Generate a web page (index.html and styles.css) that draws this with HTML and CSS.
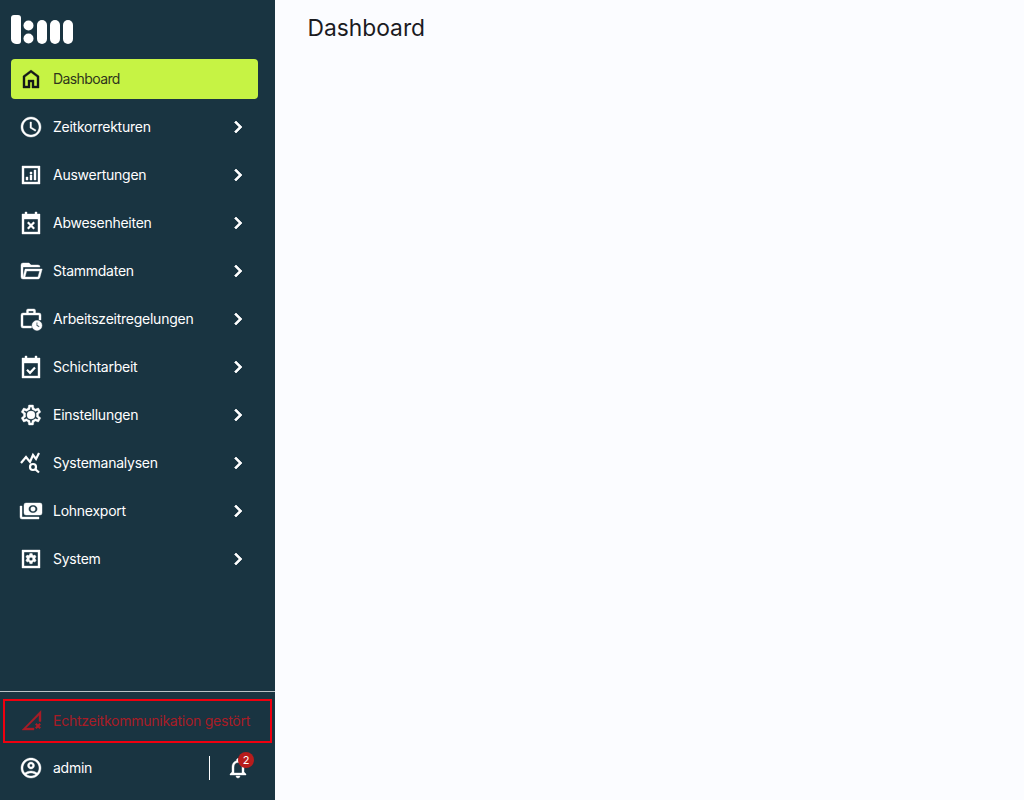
FILE: index.html
```html
<!DOCTYPE html>
<html lang="de">
<head>
<meta charset="utf-8">
<title>Dashboard</title>
<link rel="stylesheet" href="styles.css">
</head>
<body>
<div class="app">
  <aside class="sidebar">
    <div class="logo">
      <svg width="63" height="29" viewBox="0 0 63 29" fill="#fff">
        <path d="M3 0h4a3 3 0 0 1 3 3v23a3 3 0 0 1-3 3H5a5 5 0 0 1-5-5V3a3 3 0 0 1 3-3z"/>
        <circle cx="17.5" cy="10.5" r="5"/><circle cx="17.5" cy="23.5" r="5"/>
        <rect x="26" y="5" width="10" height="24" rx="5"/>
        <rect x="39" y="5" width="10" height="24" rx="5"/>
        <rect x="52" y="5" width="10" height="24" rx="5"/>
      </svg>
    </div>
    <nav class="nav">
      <a class="item active">
        <svg class="icon" viewBox="0 0 24 24"><path d="M6 19h3v-6h6v6h3v-9l-6-4.500L6 10v9zm-2 2V9l8-6 8 6v12h-7v-6h-2v6H4z"/></svg>
        <span class="label">Dashboard</span>
      </a>
      <a class="item">
        <svg class="icon" viewBox="0 0 24 24"><path d="M11.99 2C6.47 2 2 6.48 2 12s4.47 10 9.99 10C17.52 22 22 17.52 22 12S17.52 2 11.99 2zM12 20c-4.42 0-8-3.58-8-8s3.58-8 8-8 8 3.58 8 8-3.58 8-8 8zm.5-13H11v6l5.25 3.15.75-1.23-4.5-2.67z"/></svg>
        <span class="label">Zeitkorrekturen</span>
        <svg class="chev" viewBox="0 0 24 24"><path d="M10 6L8.59 7.41 13.17 12l-4.58 4.59L10 18l6-6z"/></svg>
      </a>
      <a class="item">
        <svg class="icon" viewBox="0 0 24 24"><path d="M3 3h18v18H3V3zm2 2v14h14V5H5zM7 14h2v3H7zm4-2h2v5h-2zm0-3h2v2h-2zm4-2h2v10h-2z"/></svg>
        <span class="label">Auswertungen</span>
        <svg class="chev" viewBox="0 0 24 24"><path d="M10 6L8.59 7.41 13.17 12l-4.58 4.59L10 18l6-6z"/></svg>
      </a>
      <a class="item">
        <svg class="icon" viewBox="0 0 24 24"><path d="M3 3h3V1h2v2h8V1h2v2h3v20H3V3zm2 5v13h14V8H5z"/><path class="line" d="M8.800 11.300l6.400 6.400m0-6.400l-6.400 6.400"/></svg>
        <span class="label">Abwesenheiten</span>
        <svg class="chev" viewBox="0 0 24 24"><path d="M10 6L8.59 7.41 13.17 12l-4.58 4.59L10 18l6-6z"/></svg>
      </a>
      <a class="item">
        <svg class="icon" viewBox="0 0 24 24"><path d="M6.1 10L4 18V8h17a2 2 0 0 0-2-2h-7l-2-2H4a2 2 0 0 0-2 2v12a2 2 0 0 0 2 2h15c.9 0 1.700-.6 1.900-1.500L23.200 10H6.100M19 18H6l1.600-6h13L19 18z"/></svg>
        <span class="label">Stammdaten</span>
        <svg class="chev" viewBox="0 0 24 24"><path d="M10 6L8.59 7.41 13.17 12l-4.58 4.59L10 18l6-6z"/></svg>
      </a>
      <a class="item">
        <svg class="icon" viewBox="0 0 24 24"><path d="M9 2h6a1.500 1.500 0 0 1 1.500 1.500V6H20a2 2 0 0 1 2 2v5h-2V8H4v11h8.500v2H4a2 2 0 0 1-2-2V8a2 2 0 0 1 2-2h3.500V3.500A1.500 1.500 0 0 1 9 2zm.5 2v2h5V4h-5z"/><path fill-rule="evenodd" d="M18 13.500a5 5 0 1 1 0 10 5 5 0 0 1 0-10zM17.400 15.500v3.200l2.500 1.500.6-.9-2-1.200v-2.600h-1.100z"/></svg>
        <span class="label">Arbeitszeitregelungen</span>
        <svg class="chev" viewBox="0 0 24 24"><path d="M10 6L8.59 7.41 13.17 12l-4.58 4.59L10 18l6-6z"/></svg>
      </a>
      <a class="item">
        <svg class="icon" viewBox="0 0 24 24"><path d="M3 3h3V1h2v2h8V1h2v2h3v20H3V3zm2 5v13h14V8H5z"/><path class="line" d="M8 14.800l3 3 5-5.400"/></svg>
        <span class="label">Schichtarbeit</span>
        <svg class="chev" viewBox="0 0 24 24"><path d="M10 6L8.59 7.41 13.17 12l-4.58 4.59L10 18l6-6z"/></svg>
      </a>
      <a class="item">
        <svg class="icon" viewBox="0 0 24 24"><path d="M19.430 12.980c.04-.32.07-.64.07-.98 0-.34-.03-.66-.07-.98l2.110-1.650c.19-.15.24-.42.12-.64l-2-3.460c-.09-.16-.26-.25-.44-.25-.06 0-.12.01-.17.03l-2.490 1c-.52-.4-1.080-.73-1.690-.98l-.38-2.650C14.460 2.180 14.250 2 14 2h-4c-.25 0-.46.18-.49.42l-.38 2.650c-.61.25-1.170.59-1.690.98l-2.490-1c-.06-.02-.12-.03-.18-.03-.17 0-.34.09-.43.25l-2 3.460c-.13.22-.07.49.12.64l2.110 1.650c-.04.32-.07.65-.07.98 0 .33.03.66.07.98l-2.110 1.650c-.19.15-.24.42-.12.64l2 3.460c.09.16.26.25.44.25.06 0 .12-.01.17-.03l2.490-1c.52.4 1.080.73 1.690.98l.38 2.650c.03.24.24.42.49.42h4c.25 0 .46-.18.49-.42l.38-2.650c.61-.25 1.170-.59 1.690-.98l2.490 1c.06.02.12.03.18.03.17 0 .34-.09.43-.25l2-3.460c.12-.22.07-.49-.12-.64l-2.110-1.650zm-1.980-1.710c.04.31.05.52.05.73 0 .21-.02.43-.05.73l-.14 1.130.89.7 1.080.84-.7 1.210-1.270-.51-1.040-.42-.9.68c-.43.32-.84.56-1.250.73l-1.060.43-.16 1.130-.2 1.350h-1.400l-.19-1.350-.16-1.130-1.060-.43c-.43-.18-.83-.41-1.230-.71l-.91-.7-1.060.43-1.270.51-.7-1.210 1.080-.84.89-.7-.14-1.130c-.03-.31-.05-.54-.05-.74s.02-.43.05-.73l.14-1.130-.89-.7-1.080-.84.7-1.210 1.270.51 1.040.42.9-.68c.43-.32.84-.56 1.250-.73l1.060-.43.16-1.130.2-1.350h1.390l.19 1.350.16 1.130 1.060.43c.43.18.83.41 1.230.71l.91.7 1.060-.43 1.270-.51.7 1.210-1.070.85-.89.7.14 1.130zM12 8a4 4 0 1 0 0 8 4 4 0 0 0 0-8z"/></svg>
        <span class="label">Einstellungen</span>
        <svg class="chev" viewBox="0 0 24 24"><path d="M10 6L8.59 7.41 13.17 12l-4.58 4.59L10 18l6-6z"/></svg>
      </a>
      <a class="item">
        <svg class="icon" viewBox="0 0 24 24"><path class="line" d="M2 12l5-6 4 5 3-7 3 4 3-6"/><circle class="line" cx="14" cy="16" r="3"/><path class="line" d="M16.200 18.200l3.800 3.300"/></svg>
        <span class="label">Systemanalysen</span>
        <svg class="chev" viewBox="0 0 24 24"><path d="M10 6L8.59 7.41 13.17 12l-4.58 4.59L10 18l6-6z"/></svg>
      </a>
      <a class="item">
        <svg class="icon" viewBox="0 0 24 24"><path fill-rule="evenodd" d="M7 4h14a2 2 0 0 1 2 2v8a2 2 0 0 1-2 2H7a2 2 0 0 1-2-2V6a2 2 0 0 1 2-2zm7 2c-2.500 0-4.500 1.700-4.500 4s2 4 4.500 4 4.500-1.700 4.500-4-2-4-4.500-4z"/><circle cx="14" cy="10" r="2.300"/><path d="M1 7h2v11h17v2H3a2 2 0 0 1-2-2V7z"/></svg>
        <span class="label">Lohnexport</span>
        <svg class="chev" viewBox="0 0 24 24"><path d="M10 6L8.59 7.41 13.17 12l-4.58 4.59L10 18l6-6z"/></svg>
      </a>
      <a class="item">
        <svg class="icon" viewBox="0 0 24 24"><path d="M3 3h18v18H3V3zm2 2v14h14V5H5z"/><path fill-rule="evenodd" d="M10.800 6.500h2.400l.3 1.500 1 .6 1.500-.5 1.200 2-1.200 1c.1.300.1.700 0 1l1.200 1-1.200 2-1.500-.5-1 .6-.3 1.500h-2.400l-.3-1.500-1-.6-1.500.5-1.200-2 1.200-1c-.1-.3-.1-.7 0-1l-1.200-1 1.200-2 1.500.5 1-.6.3-1.500zM12 10.200a1.800 1.800 0 1 0 0 3.600 1.800 1.800 0 0 0 0-3.600z"/></svg>
        <span class="label">System</span>
        <svg class="chev" viewBox="0 0 24 24"><path d="M10 6L8.59 7.41 13.17 12l-4.58 4.59L10 18l6-6z"/></svg>
      </a>
    </nav>
    <div class="footer">
      <div class="status">
        <svg class="icon" viewBox="0 0 24 24"><path d="M22 1.500V12.500h-2V6.300L7 19h8v2H3L22 1.500z"/><path class="line" d="M16.800 14.800l4.400 4.400m0-4.400l-4.400 4.400"/></svg>
        <span class="label">Echtzeitkommunikation gestört</span>
      </div>
      <div class="user">
        <svg class="icon" viewBox="0 0 24 24"><path d="M12 2C6.480 2 2 6.480 2 12s4.480 10 10 10 10-4.480 10-10S17.520 2 12 2zM7.350 18.500C8.660 17.560 10.260 17 12 17s3.340.56 4.650 1.500c-1.310.94-2.910 1.500-4.650 1.500s-3.340-.56-4.650-1.500zm10.790-1.380C16.450 15.800 14.320 15 12 15s-4.450.8-6.140 2.120C4.700 15.730 4 13.950 4 12c0-4.420 3.580-8 8-8s8 3.580 8 8c0 1.950-.7 3.730-1.860 5.120zM12 6c-1.930 0-3.500 1.570-3.500 3.500S10.070 13 12 13s3.500-1.570 3.500-3.500S13.930 6 12 6zm0 5c-.83 0-1.500-.67-1.500-1.500S11.170 8 12 8s1.500.67 1.500 1.500S12.830 11 12 11z"/></svg>
        <span class="label username">admin</span>
        <span class="sep"></span>
        <span class="bell">
          <svg class="icon" viewBox="0 0 24 24"><path d="M12 22c1.100 0 2-.9 2-2h-4c0 1.100.9 2 2 2zm6-6v-5c0-3.070-1.630-5.640-4.500-6.320V4c0-.83-.67-1.500-1.500-1.500s-1.500.67-1.500 1.500v.68C7.640 5.360 6 7.920 6 11v5l-2 2v1h16v-1l-2-2zm-2 1H8v-6c0-2.480 1.510-4.500 4-4.500s4 2.020 4 4.500v6z"/></svg>
          <span class="badge">2</span>
        </span>
      </div>
    </div>
  </aside>
  <main class="main">
    <h1 class="title">Dashboard</h1>
  </main>
</div>
</body>
</html>
```
FILE: styles.css
```css
* { box-sizing: border-box; }
html, body { margin: 0; height: 100%; }
body { font-family: Inter, "Liberation Sans", sans-serif; background: #fbfcff; }
.app { display: flex; height: 800px; overflow: hidden; }
.sidebar { width: 275px; flex: none; background: #193441; display: flex; flex-direction: column; color: #fff; }
.logo { height: 59px; padding: 15px 0 0 11px; }
.logo svg { display: block; }
.nav { display: flex; flex-direction: column; gap: 8px; padding: 0 17px 0 11px; }
.item { height: 40px; display: flex; align-items: center; padding: 0 8px; border-radius: 4px; color: #fff; }
.item.active { background: #c6f344; color: #14181a; }
.item.active .label { color: #2f351c; letter-spacing: -0.6px; }
.icon { width: 24px; height: 24px; flex: none; fill: currentColor; stroke: currentColor; stroke-width: 0.4; }
.icon .line { fill: none; stroke-width: 2.2; }
.label { font-size: 14px; line-height: 20px; margin-left: 10px; letter-spacing: -0.25px; }
.chev { width: 24px; height: 24px; flex: none; fill: currentColor; stroke: currentColor; stroke-width: 0.7; margin-left: auto; }
.footer { margin-top: auto; display: flex; flex-direction: column; border-top: 1px solid #b9c2c6; padding-top: 7px; height: 109px; }
.status { margin: 0 3px; height: 44px; flex: none; border: 2px solid #f0000f; display: flex; align-items: center; padding-left: 14px; color: #a81c26; }
.user { display: flex; align-items: center; height: 50px; padding: 0 25px 0 19px; }
.username { flex: 1; }
.sep { width: 1px; height: 24px; background: #fff; }
.bell { position: relative; margin-left: 16px; display: flex; }
.badge { position: absolute; top: -4px; right: -4px; width: 16px; height: 16px; border-radius: 50%; background: #b71c1c; color: #fff; font-size: 11px; line-height: 16px; text-align: center; }
.main { flex: 1; padding: 0 32.5px; }
.title { margin: 14px 0 0; font-size: 22.8px; line-height: 28px; font-weight: 400; color: #1b1b1f; }
```
